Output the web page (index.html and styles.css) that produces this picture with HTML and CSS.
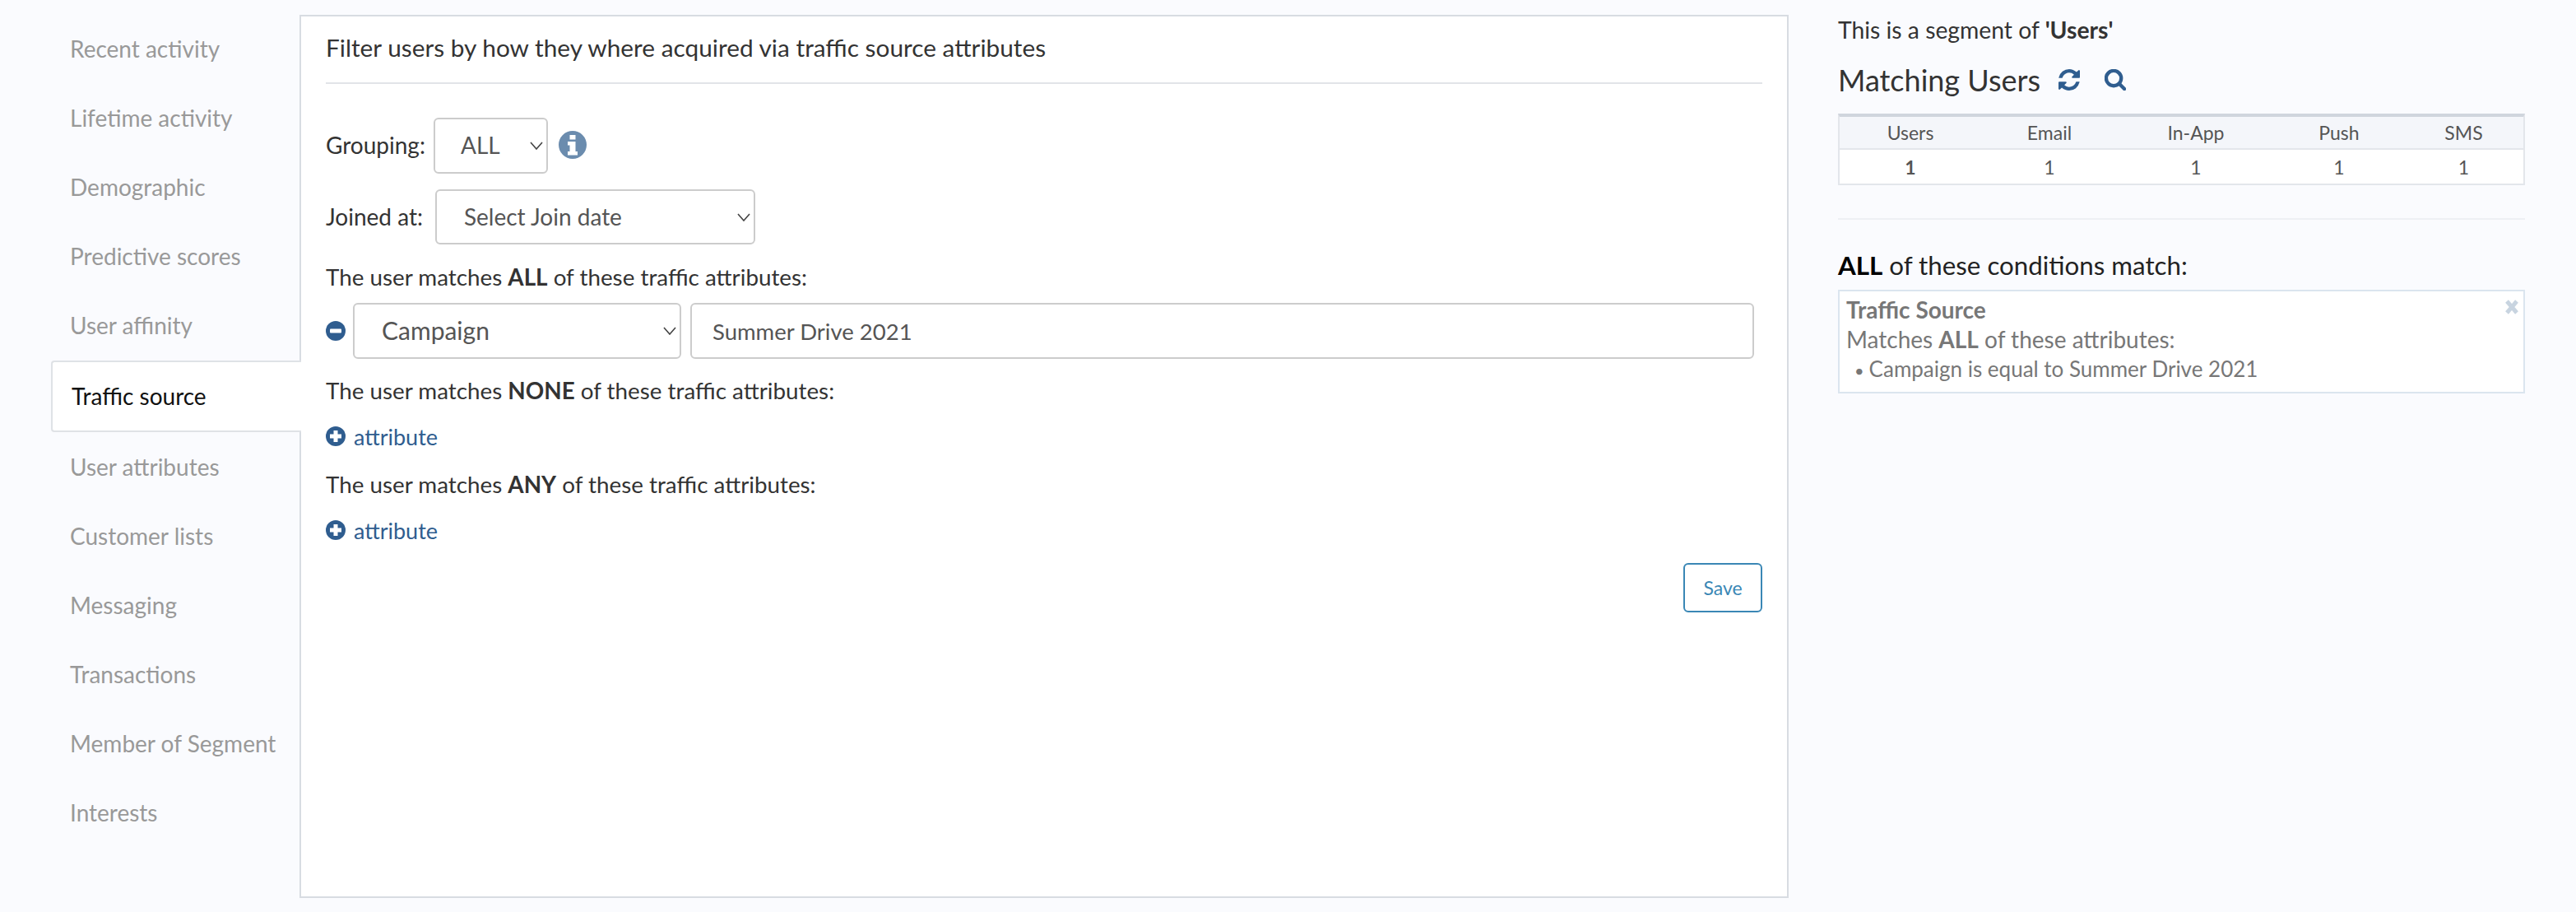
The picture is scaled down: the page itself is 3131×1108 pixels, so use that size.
FILE: index.html
```html
<!DOCTYPE html>
<html lang="en">
<head>
    <meta charset="UTF-8">
    <title>Segment - Traffic source</title>
    <link rel="stylesheet" href="styles.css">
</head>
<body>
<div class="page">
    <ul class="side-menu">
        <li>Recent activity</li>
        <li>Lifetime activity</li>
        <li>Demographic</li>
        <li>Predictive scores</li>
        <li>User affinity</li>
        <li class="active">Traffic source</li>
        <li>User attributes</li>
        <li>Customer lists</li>
        <li>Messaging</li>
        <li>Transactions</li>
        <li>Member of Segment</li>
        <li>Interests</li>
    </ul>

    <main class="panel">
        <h2 class="panel-title">Filter users by how they where acquired via traffic source attributes</h2>

        <div class="form-row grouping-row">
            <label>Grouping:</label>
            <span class="select-wrap grouping-select">
                <select><option>ALL</option></select>
                <svg class="chevron" viewBox="0 0 16 10"><path d="M1 1l7 8 7-8"/></svg>
            </span>
            <svg class="info-icon" viewBox="0 0 34 34">
                <circle cx="17" cy="17" r="17"/>
                <path class="icon-cut" d="M13.500 5h7v5.500h-7zM11 13h9.500v12H23v4.500H11V25h2.500v-7.500H11z"/>
            </svg>
        </div>

        <div class="form-row joined-row">
            <label>Joined at:</label>
            <span class="select-wrap joined-select">
                <select><option>Select Join date</option></select>
                <svg class="chevron" viewBox="0 0 16 10"><path d="M1 1l7 8 7-8"/></svg>
            </span>
        </div>

        <p class="match-label all-label">The user matches <b>ALL</b> of these traffic attributes:</p>
        <div class="attr-row">
            <svg class="round-icon" viewBox="0 0 24 24">
                <circle cx="12" cy="12" r="12"/>
                <rect class="icon-cut" x="5" y="9.500" width="14" height="5" rx="1"/>
            </svg>
            <span class="select-wrap campaign-select">
                <select><option>Campaign</option></select>
                <svg class="chevron" viewBox="0 0 16 10"><path d="M1 1l7 8 7-8"/></svg>
            </span>
            <input class="attr-input" type="text" value="Summer Drive 2021">
        </div>

        <p class="match-label">The user matches <b>NONE</b> of these traffic attributes:</p>
        <a class="add-link" href="#">
            <svg class="round-icon" viewBox="0 0 24 24">
                <circle cx="12" cy="12" r="12"/>
                <path class="icon-cut" d="M9.500 5h5v4.500H19v5h-4.500V19h-5v-4.500H5v-5h4.500z"/>
            </svg>
            attribute
        </a>

        <p class="match-label">The user matches <b>ANY</b> of these traffic attributes:</p>
        <a class="add-link" href="#">
            <svg class="round-icon" viewBox="0 0 24 24">
                <circle cx="12" cy="12" r="12"/>
                <path class="icon-cut" d="M9.500 5h5v4.500H19v5h-4.500V19h-5v-4.500H5v-5h4.500z"/>
            </svg>
            attribute
        </a>

        <div class="actions">
            <button class="save-btn">Save</button>
        </div>
    </main>

    <aside class="summary">
        <p class="segment-of">This is a segment of <b>'Users'</b></p>
        <div class="matching">
            <h3>Matching Users</h3>
            <svg class="tool-icon refresh-icon" viewBox="128 128 1536 1536">
                <path d="M1639 1056q0 5-1 7-64 268-268 434.500t-478 166.500q-146 0-282.500-55t-243.500-157l-129 129q-19 19-45 19t-45-19-19-45v-448q0-26 19-45t45-19h448q26 0 45 19t19 45-19 45l-137 137q71 66 161 102t187 36q134 0 250-65t186-179q11-17 53-117 8-23 30-23h192q13 0 22.500 9.500t9.500 22.500zm25-800v448q0 26-19 45t-45 19h-448q-26 0-45-19t-19-45 19-45l138-138q-148-137-349-137-134 0-250 65t-186 179q-11 17-53 117-8 23-30 23h-199q-13 0-22.500-9.500t-9.500-22.500v-7q65-268 270-434.500t480-166.500q146 0 284 55.500t245 156.500l130-129q19-19 45-19t45 19 19 45z"/>
            </svg>
            <svg class="tool-icon search-icon" viewBox="0 0 27 27">
                <circle cx="11.500" cy="11.500" r="9.500"/>
                <path d="M18.500 18.500l6.500 6.500"/>
            </svg>
        </div>

        <table class="counts">
            <thead>
                <tr><th>Users</th><th>Email</th><th>In-App</th><th>Push</th><th>SMS</th></tr>
            </thead>
            <tbody>
                <tr><td class="first">1</td><td>1</td><td>1</td><td>1</td><td>1</td></tr>
            </tbody>
        </table>

        <div class="divider"></div>

        <p class="conditions-title"><b>ALL</b> of these conditions match:</p>
        <div class="condition-box">
            <svg class="close-icon" viewBox="0 0 18 20"><path d="M3 3l12 14M15 3L3 17"/></svg>
            <div class="condition-name">Traffic Source</div>
            <div>Matches <b>ALL</b> of these attributes:</div>
            <ul class="condition-list">
                <li>Campaign is equal to Summer Drive 2021</li>
            </ul>
        </div>
    </aside>
</div>
</body>
</html>
```

FILE: styles.css
```css
* {
    margin: 0;
    padding: 0;
    box-sizing: border-box;
}
body {
    background: #fafbfe;
    font-family: Lato, "Open Sans", sans-serif;
    font-size: 28px;
    color: #333;
    height: 1108px;
    overflow: hidden;
}
b {
    font-weight: 700;
}
.page {
    display: flex;
    align-items: flex-start;
}

/* Left menu */
.side-menu {
    list-style: none;
    width: 364px;
    padding: 17px 0 0 62px;
    flex-shrink: 0;
}
.side-menu li {
    height: 84px;
    line-height: 84px;
    padding-left: 23px;
    color: #999;
}
.side-menu li.active {
    position: relative;
    z-index: 1;
    height: 87px;
    line-height: 83px;
    margin-top: 1px;
    margin-right: -2px;
    background: #fff;
    color: #111;
    border: 2px solid #dfe2e6;
    border-right: none;
    border-radius: 4px 0 0 4px;
}

/* Middle panel */
.panel {
    width: 1810px;
    height: 1073px;
    margin-top: 18px;
    padding: 0 30px;
    background: #fff;
    border: 2px solid #d8dce2;
    flex-shrink: 0;
}
.panel-title {
    font-size: 29.8px;
    font-weight: 400;
    line-height: 40px;
    padding: 18px 0 22px;
    border-bottom: 2px solid #e2e4e8;
}
.form-row {
    display: flex;
    align-items: center;
}
.grouping-row {
    margin-top: 41px;
}
.joined-row {
    margin-top: 19px;
}
.form-row label {
    padding-bottom: 2px;
}
.select-wrap {
    position: relative;
    display: block;
}
.select-wrap select {
    display: block;
    width: 100%;
    height: 100%;
    appearance: none;
    font: inherit;
    color: #555;
    background: #fff;
    border: 2px solid #ccc;
    border-radius: 6px;
    padding: 0 0 2px 33px;
}
.chevron {
    position: absolute;
    right: 6px;
    top: 29px;
    width: 16px;
    height: 10px;
    fill: none;
    stroke: #444;
    stroke-width: 1.6;
}
.grouping-select {
    width: 139px;
    height: 68px;
    margin-left: 10px;
}
.grouping-select select {
    padding-left: 31px;
}
.joined-select {
    width: 389px;
    height: 67px;
    margin-left: 15px;
}
.info-icon {
    width: 34px;
    height: 34px;
    margin: -2px 0 0 13px;
    fill: #6b8cae;
}
.info-icon .icon-cut,
.round-icon .icon-cut {
    fill: #fff;
}
.match-label {
    font-size: 27.8px;
    line-height: 40px;
    margin-top: 19px;
}
.all-label {
    margin-top: 20px;
}
.attr-row {
    display: flex;
    align-items: center;
    margin-top: 11px;
}
.round-icon {
    width: 24px;
    height: 24px;
    fill: #2f5d8f;
    flex-shrink: 0;
}
.campaign-select {
    width: 399px;
    height: 68px;
    margin-left: 9px;
    font-size: 30px;
}
.attr-input {
    width: 1293px;
    height: 68px;
    margin-left: 11px;
    padding-left: 25px;
    font: inherit;
    font-size: 27.5px;
    color: #555;
    border: 2px solid #ccc;
    border-radius: 6px;
}
.add-link {
    display: flex;
    align-items: center;
    gap: 10px;
    height: 40px;
    margin-top: 15px;
    font-size: 27px;
    color: #2f5d8f;
    text-decoration: none;
}
.actions {
    display: flex;
    justify-content: flex-end;
    margin-top: 20px;
}
.save-btn {
    width: 96px;
    height: 60px;
    background: #fff;
    border: 2px solid #3a87b5;
    border-radius: 6px;
    color: #3a87b5;
    font: inherit;
    font-size: 23px;
}

/* Right column */
.summary {
    width: 835px;
    margin-left: 60px;
    padding-top: 16px;
    flex-shrink: 0;
}
.segment-of {
    font-size: 28.3px;
    line-height: 40px;
}
.matching {
    display: flex;
    align-items: center;
    height: 50px;
    margin-top: 16px;
}
.matching h3 {
    font-size: 36px;
    font-weight: 400;
}
.tool-icon {
    width: 26px;
    height: 26px;
}
.refresh-icon {
    margin-left: 22px;
    fill: #2f5d8f;
}
.search-icon {
    margin-left: 30px;
    fill: none;
    stroke: #2f5d8f;
    stroke-width: 4.5;
    stroke-linecap: round;
}
.counts {
    width: 100%;
    height: 87px;
    margin-top: 16px;
    border-collapse: separate;
    border-spacing: 0;
    border: 2px solid #e3e6eb;
    border-top: 4px solid #d0d5dd;
    table-layout: fixed;
    font-size: 23px;
    text-align: center;
    background: #fff;
}
.counts th {
    height: 40px;
    font-weight: 400;
    color: #555;
    background: #f4f6fa;
    border-bottom: 2px solid #e3e6eb;
}
.counts td {
    color: #555;
}
.counts td.first {
    font-weight: 700;
}
.counts th:nth-child(1) { width: 172px; }
.counts th:nth-child(2) { width: 166px; }
.counts th:nth-child(3) { width: 190px; }
.counts th:nth-child(4) { width: 158px; }
.divider {
    height: 2px;
    margin-top: 40px;
    background: #eef0f4;
}
.conditions-title {
    font-size: 31.3px;
    line-height: 40px;
    margin-top: 35px;
    color: #222;
}
.conditions-title b {
    color: #000;
}
.condition-box {
    position: relative;
    height: 126px;
    margin-top: 10px;
    padding: 4px 8px 0;
    background: #fff;
    border: 2px solid #dbe5ef;
    font-size: 28px;
    line-height: 36px;
    color: #777;
}
.condition-name {
    font-weight: 700;
}
.condition-list {
    list-style: none;
    padding-left: 10px;
    font-size: 26px;
}
.condition-list li::before {
    content: "•";
    font-size: 20px;
    margin-right: 6px;
}
.close-icon {
    position: absolute;
    top: 9px;
    right: 5px;
    width: 18px;
    height: 20px;
    fill: none;
    stroke: #c8d4e0;
    stroke-width: 5;
}
```
